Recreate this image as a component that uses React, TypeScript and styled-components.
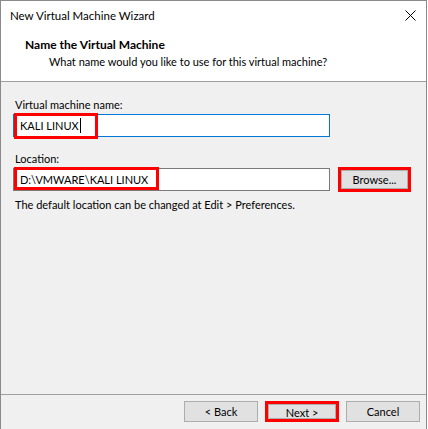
import React from "react";
import styled, { createGlobalStyle } from "styled-components";

const Global = createGlobalStyle`
  html, body { margin: 0; padding: 0; background: #ffffff; }
  body { font-family: "Segoe UI", Lato, "Liberation Sans", sans-serif; font-size: 11px; color: #000; }
  * { box-sizing: border-box; }
`;

const Window = styled.div`
  width: 427px;
  height: 429px;
  border: 1px solid #8a8a8a;
  border-bottom: none;
  display: flex;
  flex-direction: column;
  background: #f0f0f0;
`;

const Top = styled.div`
  background: #ffffff;
  height: 81px;
  display: flex;
  flex-direction: column;
  border-bottom: 1px solid #a0a0a0;
`;

const TitleBar = styled.div`
  height: 29px;
  display: flex;
  align-items: center;
  justify-content: space-between;
  padding: 0 10px 0 9px;
`;

const TitleText = styled.span`
  font-size: 11.5px;
  line-height: 15px;
  color: #000;
`;

const Close = styled.svg`
  width: 11px;
  height: 11px;
`;

const Header = styled.div`
  display: flex;
  flex-direction: column;
  padding: 7px 0 0 24px;
  gap: 2px;
`;

const HeaderTitle = styled.div`
  font-weight: 700;
  font-size: 12px;
  line-height: 15px;
`;

const HeaderSub = styled.div`
  line-height: 15px;
  padding-left: 24px;
`;

const Body = styled.div`
  flex: 1;
  display: flex;
  flex-direction: column;
  padding: 15px 0 0 12px;
`;

const Label = styled.div<{ $mt?: number }>`
  line-height: 15px;
  padding-left: 2px;
  margin-top: ${(p) => p.$mt ?? 0}px;
`;

const Row = styled.div`
  display: flex;
  align-items: center;
  gap: 8px;
  margin-top: 2px;
`;

const Field = styled.div<{ $focused?: boolean }>`
  position: relative;
  width: 317px;
  height: 23px;
  background: #ffffff;
  border: 1px solid ${(p) => (p.$focused ? "#0078d7" : "#7a7a7a")};
  display: flex;
  align-items: center;
  padding-left: 6px;
  line-height: 15px;
`;

const Caret = styled.span`
  display: inline-block;
  width: 1px;
  height: 15px;
  background: #000;
  margin-left: 1px;
`;

const Highlight = styled.div<{ $w: number; $h: number; $top: number }>`
  position: absolute;
  left: 0;
  top: ${(p) => p.$top}px;
  width: ${(p) => p.$w}px;
  height: ${(p) => p.$h}px;
  border: 3px solid #ff0000;
  pointer-events: none;
`;

const Help = styled.div`
  line-height: 15px;
  margin-top: 6px;
  padding-left: 2px;
`;

const Spacer = styled.div`
  flex: 1;
`;

const Footer = styled.div`
  height: 35px;
  border-top: 1px solid #a0a0a0;
  display: flex;
  justify-content: flex-end;
  align-items: center;
  gap: 7px;
  padding: 0 6px 1px 0;
`;

const Button = styled.button<{ $hl?: boolean; $w?: number; $h?: number }>`
  width: ${(p) => p.$w ?? 74}px;
  height: ${(p) => p.$h ?? 21}px;
  margin: ${(p) => (p.$hl ? "0 3px" : "0")};
  background: #e1e1e1;
  border: 1px solid #adadad;
  box-shadow: ${(p) => (p.$hl ? "0 0 0 3px #ff0000" : "none")};
  font-family: inherit;
  font-size: 11px;
  color: #000;
  padding: 0;
  line-height: 15px;
`;

export default function App() {
  return (
    <>
      <Global />
      <Window>
        <Top>
          <TitleBar>
            <TitleText>New Virtual Machine Wizard</TitleText>
            <Close viewBox="0 0 11 11">
              <path d="M0.5 0.5 L10.5 10.5 M10.5 0.5 L0.5 10.5" stroke="#000" strokeWidth="1" fill="none" />
            </Close>
          </TitleBar>
          <Header>
            <HeaderTitle>Name the Virtual Machine</HeaderTitle>
            <HeaderSub>What name would you like to use for this virtual machine?</HeaderSub>
          </Header>
        </Top>
        <Body>
          <Label>Virtual machine name:</Label>
          <Row>
            <Field $focused>
              <span>KALI LINUX</span>
              <Caret />
              <Highlight $w={84} $h={26} $top={-2} />
            </Field>
          </Row>
          <Label $mt={14}>Location:</Label>
          <Row>
            <Field>
              <span>D:\VMWARE\KALI LINUX</span>
              <Highlight $w={145} $h={23} $top={-2} />
            </Field>
            <Button $hl $w={67} $h={19}>Browse...</Button>
          </Row>
          <Help>The default location can be changed at Edit &gt; Preferences.</Help>
          <Spacer />
        </Body>
        <Footer>
          <Button>&lt; Back</Button>
          <Button $hl $w={68} $h={15}>Next &gt;</Button>
          <Button>Cancel</Button>
        </Footer>
      </Window>
    </>
  );
}
